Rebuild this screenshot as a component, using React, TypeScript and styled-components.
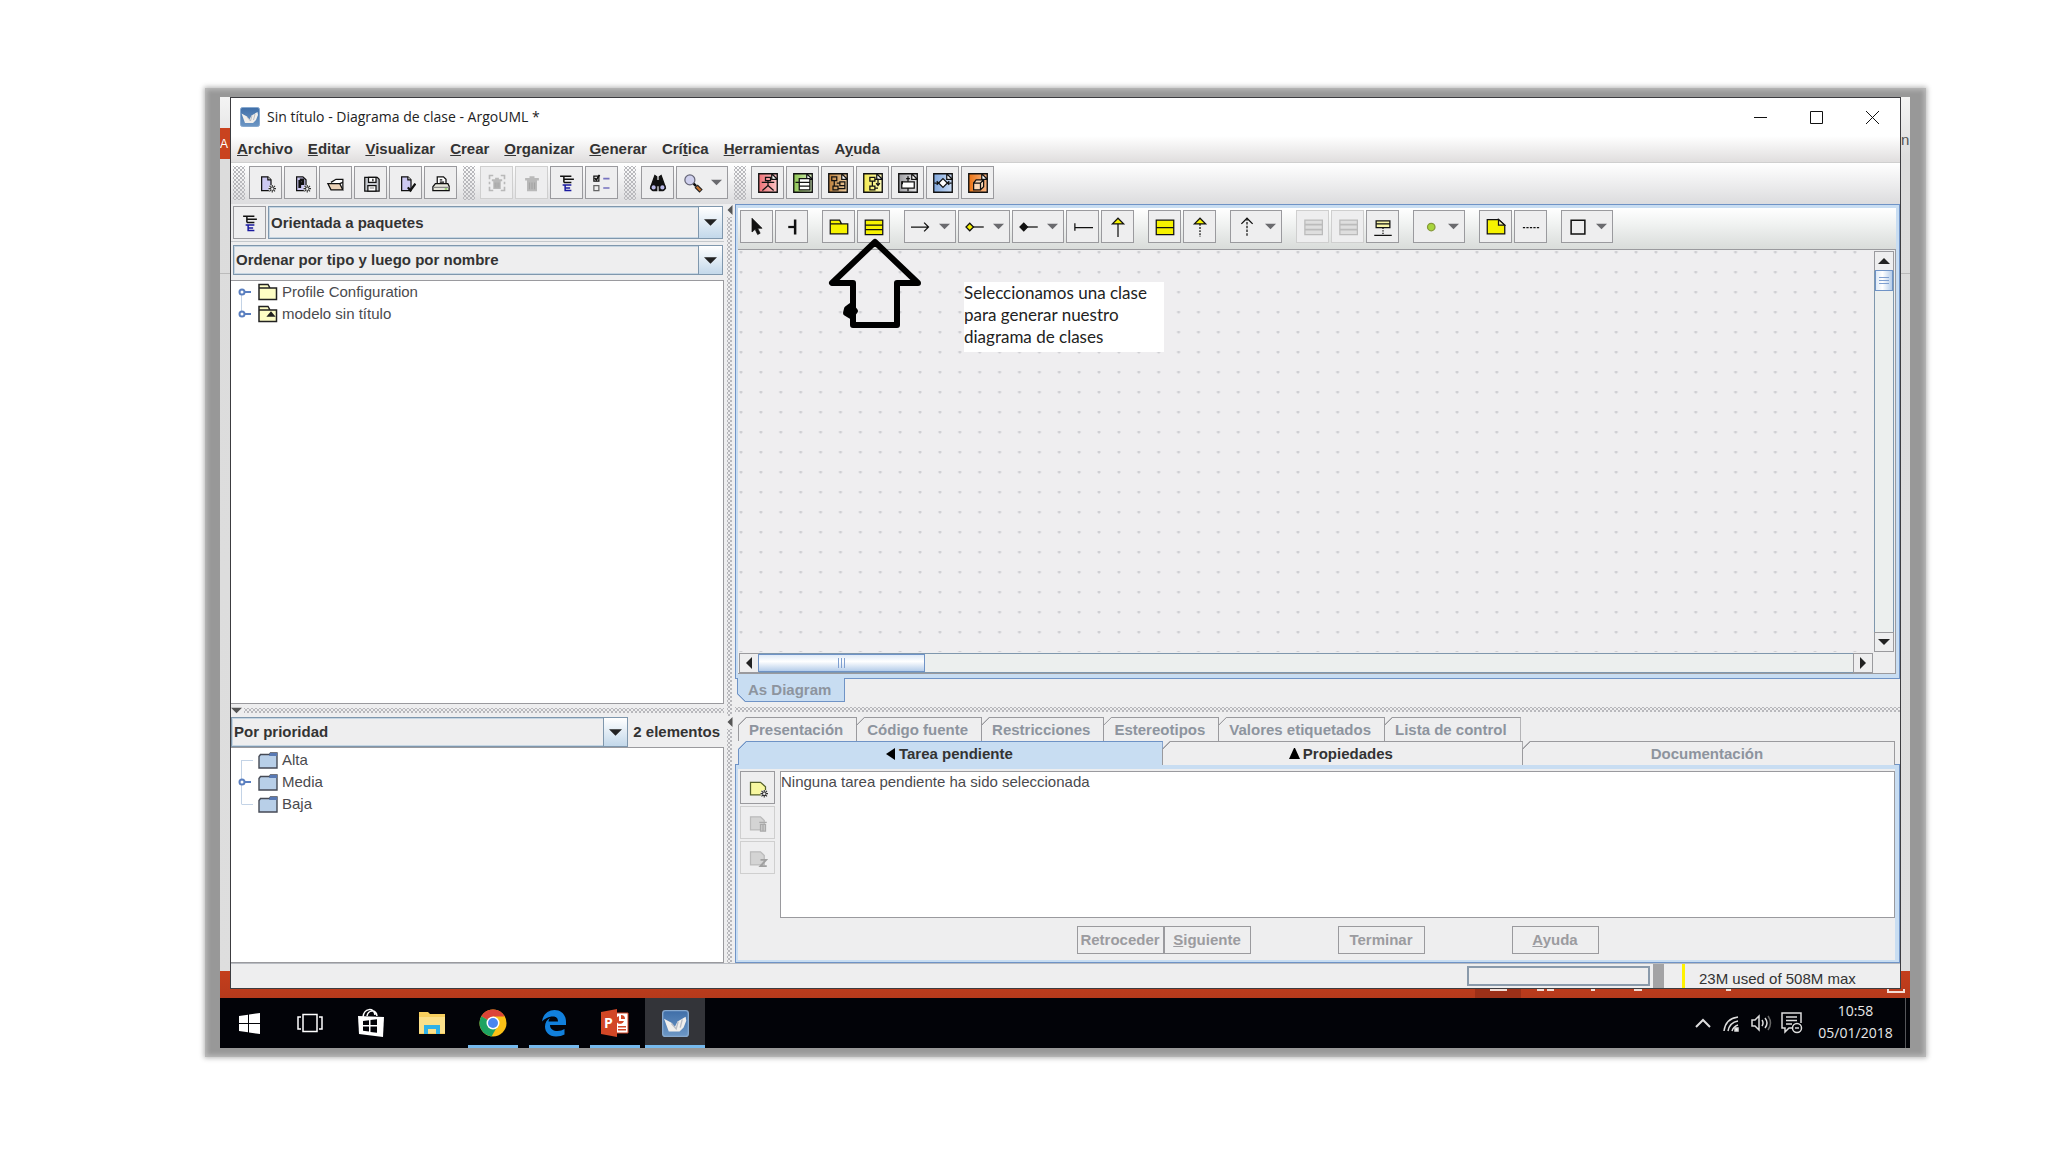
import React from "react";
import styled, { createGlobalStyle, css } from "styled-components";

const sans = `"Liberation Sans", Arial, sans-serif`;
const segoe = `"Open Sans", "Noto Sans", sans-serif`;
const line = "#9a9a9e";
const steel = "#7f97ad";
const blue = "#6f93c6";
const paleBlue = "#c8ddf2";
const face = "#eeeeef";

const bumps = css`
  background-image: radial-gradient(#b8b8bc 1px, transparent 1px),
    radial-gradient(#b8b8bc 1px, transparent 1px);
  background-size: 4px 4px;
  background-position: 0 0, 2px 2px;
`;

const GlobalStyle = createGlobalStyle`
  * { box-sizing: border-box; }
  body { margin: 0; background: #fff; }
  button, select, textarea { font: inherit; color: inherit; margin: 0; }
`;

/* ---------- page and desktop ---------- */
const Page = styled.div`
  min-height: 100vh;
  padding: 88px 122px 95px 205px;
  display: flex;
  font-family: ${sans};
  font-size: 15px;
  line-height: 18px;
  color: #333;
`;
const Frame = styled.div`
  flex: 1;
  min-width: 0;
  display: flex;
  flex-direction: column;
  padding: 9px 16px 9px 15px;
  background: #989898;
  box-shadow: 0 0 5px 1px #b4b4b4, inset 0 0 4px 2px #bcbcbc;
`;
const Desktop = styled.div`
  flex: 1;
  display: flex;
  position: relative;
  overflow: hidden;
  padding: 0 9px 9px 10px;
  background: linear-gradient(#c43e1c, #b53a1c) left bottom / 100% 27px no-repeat,
    linear-gradient(#c9431f, #c9431f) 0 31px / 10px 31px no-repeat,
    linear-gradient(#bbb, #bbb) 0 176px / 100% 1px no-repeat,
    linear-gradient(#f4f4f4, #dcdcdc 62px, #dedede);
`;
const Peek = styled.span<{ $side: "left" | "right"; $top: number; $color: string }>`
  position: absolute;
  top: ${(p) => p.$top}px;
  ${(p) => p.$side}: 0;
  width: 9px;
  font-size: ${(p) => (p.$side === "left" ? 12 : 15)}px;
  color: ${(p) => p.$color};
`;
const HiddenStatus = styled.svg`
  position: absolute;
  right: 0;
  bottom: 0;
`;
const Win = styled.section`
  flex: 1;
  min-width: 0;
  display: flex;
  flex-direction: column;
  position: relative;
  border: 1px solid #3c3c40;
  background: ${face};
`;

/* ---------- title and menus ---------- */
const TitleBar = styled.header`
  height: 38px;
  flex: none;
  display: flex;
  align-items: center;
  background: #fff;
  padding-left: 9px;
  font-family: ${segoe};
  color: #222;
`;
const Title = styled.h1`
  flex: 1;
  margin: 0 0 0 7px;
  font-size: 14px;
  font-weight: 400;
`;
const WinButton = styled.button`
  width: 56px;
  height: 38px;
  border: 0;
  padding: 0;
  background: none;
  display: grid;
  place-items: center;
`;
const MenuBar = styled.nav`
  height: 27px;
  flex: none;
  display: flex;
  align-items: center;
  gap: 15px;
  padding-left: 6px;
  border-bottom: 1px solid #cfcfcf;
  background: linear-gradient(#fff, #e0dede);
`;
const MenuItem = styled.button`
  border: 0;
  padding: 0;
  background: none;
  font-size: 15px;
  font-weight: 700;
`;

/* ---------- toolbars ---------- */
const ToolBar = styled.div`
  height: 41px;
  flex: none;
  display: flex;
  align-items: flex-start;
  padding: 3px 2px 0;
  background: linear-gradient(#fff, #dcdcde);
`;
const Grip = styled.span`
  width: 12px;
  height: 34px;
  margin: 0 5px 0 6px;
  ${bumps}
  &:first-child {
    margin: 0 4px 0 0;
  }
`;
const Group = styled.div`
  display: flex;
  gap: 2px;
  & + & {
    margin-left: 14px;
  }
`;
const Tool = styled.button<{ $drop?: boolean }>`
  width: ${(p) => (p.$drop ? 52 : 33)}px;
  height: 33px;
  flex: none;
  padding: 0;
  display: flex;
  align-items: center;
  justify-content: center;
  gap: 8px;
  border: 1px solid ${line};
  background: ${face};
  &:disabled {
    border-color: #cfcfcf;
  }
`;
const Main = styled.main`
  flex: 1;
  min-height: 0;
  display: flex;
`;

/* ---------- left column ---------- */
const Side = styled.aside`
  flex: 0 0 493px;
  display: flex;
  flex-direction: column;
`;
const Perspective = styled.div`
  display: flex;
  gap: 2px;
  padding: 2px 1px 2px 2px;
  border-bottom: 1px solid #c4c8cc;
`;
const Ordering = styled.div`
  display: flex;
  padding: 3px 1px 5px 2px;
`;
const ComboBox = styled.div<{ $h: number }>`
  position: relative;
  flex: 1;
  height: ${(p) => p.$h}px;
  border: 1px solid ${steel};
  box-shadow: inset 0 0 0 1px #c5d5e2;
  background: ${face};
`;
const ComboSelect = styled.select`
  appearance: none;
  width: 100%;
  height: 100%;
  border: 0;
  padding: 0 26px 0 2px;
  background: none;
  font-size: 15px;
  font-weight: 700;
`;
const ComboArrow = styled.span`
  position: absolute;
  inset: 0 0 0 auto;
  width: 24px;
  display: grid;
  place-items: center;
  border-left: 1px solid ${steel};
  background: linear-gradient(#fff, #c3d8ea);
  pointer-events: none;
`;
const Tree = styled.ul<{ $fill?: boolean }>`
  flex: 1;
  margin: 0;
  padding: ${(p) => (p.$fill ? 1 : 0)}px 0 0 7px;
  list-style: none;
  background: #fff;
  border: 1px solid ${line};
  border-left: 0;
`;
const Node = styled.li`
  height: 22px;
  display: flex;
  align-items: center;
  gap: 4px;
  color: #4a4a4e;
`;
const SideSplit = styled.div`
  height: 13px;
  flex: none;
  display: flex;
  align-items: center;
  gap: 2px;
`;
const Bumps = styled.span<{ $v?: boolean }>`
  ${(p) => (p.$v ? "flex: 1; width: 5px;" : "flex: 1; height: 5px;")}
  ${bumps}
`;
const TodoPane = styled.div`
  flex: 0 0 246px;
  display: flex;
  flex-direction: column;
`;
const TodoHead = styled.div`
  display: flex;
  align-items: center;
  gap: 5px;
  padding-right: 4px;
  font-weight: 700;
`;
const MainSplit = styled.div`
  flex: 0 0 11px;
  display: flex;
  flex-direction: column;
`;
const SplitPart = styled.div<{ $h?: number }>`
  flex: ${(p) => (p.$h ? `0 0 ${p.$h}px` : "1")};
  display: flex;
  flex-direction: column;
  align-items: center;
  gap: 2px;
  padding-top: 1px;
`;

/* ---------- diagram editor ---------- */
const Right = styled.div`
  flex: 1;
  min-width: 0;
  display: flex;
  flex-direction: column;
`;
const Editor = styled.div`
  flex: 1;
  display: flex;
  flex-direction: column;
  border: 1px solid ${blue};
  padding: 3px 3px 4px 2px;
  background: ${paleBlue};
`;
const EditorBody = styled.div`
  flex: 1;
  display: grid;
  grid-template-columns: 1fr 20px;
  grid-template-rows: 1fr 20px;
  gap: 1px;
  padding: 1px 1px 0;
  background: ${face};
  border: 1px solid ${line};
  border-left: 0;
`;
const DiagramBar = styled(ToolBar)`
  padding-top: 2px;
  background: linear-gradient(#fff, #f0f2f1 40%, #d9dcda);
`;
const Canvas = styled.div`
  position: relative;
  background-color: #efeef0;
  background-image: radial-gradient(circle at 2px 1px, #cfcfd3 1px, transparent 2px);
  background-size: 20px 20px;
  background-repeat: round repeat;
`;
const BigArrow = styled.svg`
  position: absolute;
  left: 86px;
  top: -16px;
`;
const Callout = styled.p`
  position: absolute;
  left: 225px;
  top: 31px;
  width: 200px;
  margin: 0;
  padding: 0 0 4px;
  background: #fff;
  color: #222;
  font-family: Lato, "Open Sans", sans-serif;
  font-size: 17px;
  line-height: 22px;
`;
const Track = styled.div<{ $v?: boolean }>`
  display: flex;
  flex-direction: ${(p) => (p.$v ? "column" : "row")};
  border: 1px solid ${steel};
  background: #ecefee;
`;
const Step = styled.button`
  width: 18px;
  height: 18px;
  flex: none;
  padding: 0;
  border: 0;
  outline: 1px solid ${line};
  background: ${face};
  display: grid;
  place-items: center;
`;
const Thumb = styled.div<{ $v?: boolean }>`
  ${(p) => (p.$v ? "height: 21px;" : "width: 167px;")}
  display: grid;
  place-items: center;
  border: 1px solid ${blue};
  background: linear-gradient(${(p) => (p.$v ? "90deg" : "180deg")}, #dfeaf7, #fff 40%, #b5cdea);
`;
const Gap = styled.span`
  flex: 1;
`;

/* ---------- tabs and details ---------- */
const Tab = styled.button<{ $on?: boolean; $grow?: number; $dim?: boolean }>`
  height: 24px;
  ${(p) => (p.$grow ? `flex: ${p.$grow} 1 0;` : "flex: none;")}
  padding: 0 13px 0 10px;
  margin-right: -1px;
  display: flex;
  align-items: center;
  justify-content: center;
  gap: 2px;
  border: 1px solid ${(p) => (p.$on ? blue : line)};
  border-bottom: 0;
  clip-path: polygon(8px 0, 100% 0, 100% 100%, 0 100%, 0 8px);
  background: linear-gradient(
      135deg,
      ${(p) => (p.$on ? blue : line)} 0 7px,
      ${(p) => (p.$on ? paleBlue : face)} 7px
    )
    border-box;
  color: ${(p) => (p.$dim ? "#8d949e" : "#333")};
  font-weight: 700;
  font-size: 15px;
  white-space: nowrap;
`;
const DiagramTab = styled(Tab)`
  position: relative;
  margin-top: -1px;
  border: 1px solid ${blue};
  border-top: 0;
  clip-path: polygon(0 0, 100% 0, 100% 100%, 8px 100%, 0 calc(100% - 8px));
  background: linear-gradient(45deg, ${blue} 0 7px, ${paleBlue} 7px) border-box;
`;
const DiagramTabs = styled.div`
  display: flex;
  padding-left: 2px;
`;
const RightSplit = styled.div`
  height: 15px;
  flex: none;
  display: flex;
  align-items: center;
`;
const TabRow = styled.div<{ $main?: boolean }>`
  display: flex;
  padding: 0 ${(p) => (p.$main ? 6 : 0)}px 0 3px;
  position: relative;
  margin-bottom: ${(p) => (p.$main ? -1 : 0)}px;
`;
const Panel = styled.div`
  border: 1px solid ${blue};
  box-shadow: inset -4px 4px 0 ${paleBlue}, inset 2px -2px 0 ${paleBlue};
  padding: 6px 4px 8px 4px;
  display: flex;
  gap: 5px;
`;
const PanelTools = styled.div`
  display: flex;
  flex-direction: column;
  gap: 2px;
`;
const PanelTool = styled(Tool)`
  width: 35px;
`;
const PanelMain = styled.div`
  flex: 1;
  display: flex;
  flex-direction: column;
  gap: 8px;
`;
const Message = styled.textarea`
  display: block;
  width: 100%;
  height: 147px;
  resize: none;
  outline: 0;
  border: 1px solid ${line};
  padding: 1px 0 0;
  background: #fff;
  color: #4a4a4e;
`;
const Wizard = styled.div`
  display: flex;
  justify-content: center;
  gap: 87px;
`;
const Pair = styled.div`
  display: flex;
`;
const WizardButton = styled.button`
  width: 87px;
  height: 28px;
  padding: 0;
  border: 1px solid ${line};
  background: ${face};
  color: #9b9b9f;
  font-size: 15px;
  font-weight: 700;
`;

/* ---------- status bar ---------- */
const Status = styled.footer`
  height: 25px;
  flex: none;
  display: flex;
  align-items: center;
  justify-content: flex-end;
  border-top: 1px solid #b9bcc2;
`;
const Progress = styled.div`
  width: 183px;
  height: 20px;
  border: 2px solid #8a9aab;
`;
const Block = styled.span`
  width: 11px;
  height: 24px;
  margin: 0 18px 0 3px;
  background: #a3a3a5;
`;
const Memory = styled.span`
  height: 24px;
  width: 218px;
  padding: 6px 0 0 14px;
  border-left: 3px solid #fff200;
  white-space: nowrap;
`;

/* ---------- taskbar ---------- */
const TaskBar = styled.div`
  height: 50px;
  flex: none;
  display: flex;
  background: #020308;
  color: #fff;
`;
const Task = styled.button<{ $running?: boolean; $active?: boolean }>`
  width: ${(p) => (p.$active ? 60 : 61)}px;
  padding: 0;
  border: 0;
  display: grid;
  place-items: center;
  background: ${(p) => (p.$active ? "#333439" : "none")};
  ${(p) =>
    (p.$running || p.$active) &&
    `background-image: linear-gradient(#76b9ed, #76b9ed);
     background-repeat: no-repeat;
     background-position: center bottom;
     background-size: ${p.$active ? "100%" : "50px"} 3px;`}
  &:first-child {
    width: 59px;
  }
`;
const Tray = styled.div`
  flex: 1;
  display: flex;
  align-items: center;
  justify-content: flex-end;
  gap: 8px;
  padding-right: 4px;
`;
const Clock = styled.time`
  width: 96px;
  height: 50px;
  margin-left: -1px;
  padding: 2px 4px 0 0;
  border-right: 1px solid #55565a;
  text-align: center;
  font-family: ${segoe};
  font-size: 14px;
  line-height: 22px;
  color: #e8e8e8;
`;
const ClockLine = styled.span`
  display: block;
`;

/* ---------- icons ---------- */
const Svg = ({ size = 20, children }: { size?: number; children: React.ReactNode }) => (
  <svg width={size} height={size} viewBox="0 0 16 16" fill="none" stroke="#111" aria-hidden="true">
    {children}
  </svg>
);
type Dir = "up" | "down" | "left" | "right";
const shapes: Record<Dir, string> = {
  down: "M0 3h12l-6 6z",
  up: "M0 9h12l-6-6z",
  left: "M9 0v12l-6-6z",
  right: "M3 0v12l6-6z",
};
const Tri = ({ dir = "down", size = 10, color = "#222" }: { dir?: Dir; size?: number; color?: string }) => (
  <svg width={size} height={size} viewBox="0 0 12 12" aria-hidden="true">
    <path d={shapes[dir]} fill={color} />
  </svg>
);
const TabMark = ({ d }: { d: string }) => (
  <svg width="12" height="14" viewBox="0 0 12 14" aria-hidden="true">
    <path d={d} fill="#000" />
  </svg>
);
const Star = ({ x = 13, y = 12.5 }: { x?: number; y?: number }) => (
  <g>
    <path
      d={`M${x - 3} ${y}h6M${x} ${y - 3}v6M${x - 2.2} ${y - 2.2}l4.400 4.400M${x + 2.2} ${y - 2.2}l-4.400 4.400`}
      stroke="#333"
      strokeWidth=".9"
    />
    <circle cx={x} cy={y} r="1" fill="#eee" stroke="none" />
  </g>
);
const Sheet = () => <path d="M4.500 3h5l2.500 2.500V14h-7.500z" fill="#cdc9f2" />;
const icNew = <Svg><Sheet /><path d="M9.500 3v2.500H12" fill="#fff" /><circle cx="13" cy="12.500" r="3" fill="#eee" stroke="none" /><Star /></Svg>;
const icNewP = <Svg><Sheet /><path d="M7 5.500v6.500M7 5.500h2.500v3H7" strokeWidth="2.200" /><circle cx="13" cy="12.500" r="3" fill="#eee" stroke="none" /><Star /></Svg>;
const icOpen = <Svg><path d="M4 7.500l4-2.500h5.500v8" fill="#fff" /><path d="M1.500 8.500h9.500l2.500 5H4z" fill="#ecd3b8" /><path d="M11 8.500l2.500-1" /></Svg>;
const icSave = <Svg><path d="M3 3.500h10l1.500 1.500v9.500H3z" fill="#c5c8ce" /><path d="M6 3.500h6v4H6z" fill="#fff" /><path d="M9.500 4.500v2" /><path d="M5.500 10h6.500v4.500H5.500z" fill="#fff" /><path d="M7 12h3.500" stroke="#999" /></Svg>;
const icExport = <Svg><Sheet /><path d="M9.500 3v2.500H12" fill="#fff" /><path d="M9.500 11.500l2 2.500L15.500 8.500" strokeWidth="1.800" /></Svg>;
const icPrint = <Svg><path d="M5 8.500V3h5l2 2v3.500" fill="#fff" /><path d="M7 5.500h2M7 7.200h3.500" /><path d="M3.500 8.500h10l1 2v3.500h-13v-3z" fill="#e8e8dc" /><path d="M2 11.500h12.500" stroke="#888" /><path d="M11 12.800h2" stroke="#7c4" /></Svg>;
const Can = () => <g stroke="none" fill="#b9b9b9"><path d="M2.500 4h11v2h-11zM6 2.500h4V4H6zM4 6h8v8.500H4z" /><path d="M6 7.500v5.500M8 7.500v5.500M10 7.500v5.500" stroke="#a4a4a4" /></g>;
const icRemove = <Svg><path d="M2 5V2h3M11 2h3v3M14 11v3h-3M5 14H2v-3M2 7v2M14 7v2" stroke="#b9b9b9" strokeWidth="1.300" /><g transform="translate(2 2) scale(.75)"><Can /></g></Svg>;
const icTrash = <Svg><Can /></Svg>;
const icTree = <Svg><path d="M2.500 2.500h9M5.500 2.500v5M5.500 5h8M5.500 7.500h6" strokeWidth="1.200" /><path d="M4.500 9.500h7M6.500 9.500v4.500h5M6.500 12h4" stroke="#1a1aa0" strokeWidth="1.200" /></Svg>;
const icCheck = <Svg><path d="M1.500 2.500h4v4h-4z" fill="#fff" /><path d="M2 4l1.500 1.500L6 1.500" strokeWidth="1.400" /><path d="M1.500 10h4v4h-4z" fill="#eee" stroke="#666" /><path d="M9 4.500h5M9 12h5" stroke="#7672c0" strokeWidth="1.300" /></Svg>;
const icFind = <Svg><path d="M5.500 2L3 9l-1 3 2 2h3V3zM10.500 2L13 9l1 3-2 2H9V3z" fill="#111" /><path d="M7 6h2v4H7z" fill="#111" /><circle cx="4.500" cy="11.500" r="2.200" fill="#b9b8e8" /><circle cx="11.500" cy="11.500" r="2.200" fill="#b9b8e8" /></Svg>;
const icZoom = <Svg><circle cx="5.500" cy="5.500" r="4" fill="#cfd0ee" stroke="#667" /><path d="M8.500 8.500l2 2" strokeWidth="2" /><path d="M10.500 10.500l4 4" stroke="#222" strokeWidth="3.600" /><path d="M11 11l3 3" stroke="#c9732c" strokeWidth="1.800" /></Svg>;
const Doc = ({ id, c, light, children }: { id: string; c: string; light: string; children: React.ReactNode }) => (
  <Svg>
    <defs>
      <linearGradient id={id}>
        <stop offset="0" stopColor={c} />
        <stop offset="1" stopColor={light} />
      </linearGradient>
    </defs>
    <path d="M.6.6h14.800v14.800H.6z" fill={`url(#${id})`} strokeWidth="1.100" />
    <path d="M11 .6V5h4.400z" fill="#fff" />
    {children}
  </Svg>
);
const diagramIcons: [string, React.ReactNode][] = [
  ["Diagrama de casos de uso", <Doc id="uc" c="#ef7076" light="#fbc4c4"><path d="M6 3.500h4v2.500H6zM3 7.500h10M8 6v4M8 10l-4.500 4M8 10l4.500 4" /></Doc>],
  ["Diagrama de clases", <Doc id="cl" c="#8fc653" light="#d8f0bd"><path d="M5 4.500h8.500v9H5z" fill="#fff" /><path d="M5 7.500h8.500M5 10.500h8.500M2 7.500h3" /></Doc>],
  ["Diagrama de secuencia", <Doc id="sq" c="#bd7f3b" light="#edcda0"><path d="M3 3h4v3H3zM9.500 7h4v3h-4zM4 10.500h4v3H4zM5 6v4.500M7 8h2.500M8 12.500h5.500V10" /></Doc>],
  ["Diagrama de estados", <Doc id="st" c="#f3e94f" light="#fdfab8"><path d="M5.500 3.500h4v3h-4zM5.500 10.500h4v3h-4zM9.500 5H12v4M10.500 8l1.500 2 1.500-2M7.500 6.500v4M9.500 12H12" /></Doc>],
  ["Diagrama de colaboración", <Doc id="co" c="#9c9ca0" light="#e6e6e8"><path d="M3 7h10v5H3z" fill="#fff" /><path d="M8 2.500V7M6.500 4.500h3M8 12v2.500M3.500 9v-2.500" /></Doc>],
  ["Diagrama de actividad", <Doc id="ac" c="#7fa6dc" light="#c9dcf5"><path d="M8 4.500L11.500 8 8 11.500 4.500 8z" fill="#fff" /><path d="M1 8h3.500M11.500 8H15M3 6.500L4.500 8 3 9.500M13 6.500L11.500 8 13 9.500" /></Doc>],
  ["Diagrama de despliegue", <Doc id="de" c="#ea7415" light="#f9b887"><path d="M4.500 8h5.500v5.500H4.500zM4.500 8l2-2.500h6V11l-2.500 2.500M10 8l2.500-2.500" fill="#fbd9b8" /></Doc>],
];
const y = "#f6f200";
const icPointer = <Svg><path d="M4 1v11l2.500-2.200L8.500 14l2-1-2-4h3.500z" fill="#111" strokeWidth=".6" /></Svg>;
const icBroom = <Svg><path d="M10.500 2v12" strokeWidth="2" /><path d="M5 8h5" strokeWidth="1.800" /></Svg>;
const icPackage = <Svg><path d="M1 5.500h14v8H1zM1 5.500V2.500h7.500l1.500 3" fill={y} /></Svg>;
const icClass = <Svg><path d="M1 2.500h14v11.500H1z" fill={y} /><path d="M1 6.500h14M1 10h14" /></Svg>;
const icAssoc = <Svg><path d="M0 8h14M10.500 4.500L14 8l-3.500 3.500" /></Svg>;
const icAggr = <Svg><path d="M6 8h9" /><path d="M.8 8l3-3 3 3-3 3z" fill={y} /></Svg>;
const icComp = <Svg><path d="M6 8h9" /><path d="M.8 8l3-3 3 3-3 3z" fill="#111" /></Svg>;
const icEnd = <Svg><path d="M1.500 5v6M1.500 8.500H16" /></Svg>;
const icGen = <Svg><path d="M8 5.500V16" /><path d="M3.500 5.500L8 1l4.500 4.500z" fill={y} /></Svg>;
const icIface = <Svg><path d="M1 2.500h14v11.500H1z" fill={y} /><path d="M1 8.500h14" /></Svg>;
const icReal = <Svg><path d="M8 5.500V16" strokeDasharray="1.500 1" /><path d="M3.500 5.500L8 1l4.500 4.500z" fill={y} /></Svg>;
const icDep = <Svg><path d="M8 1v15" strokeDasharray="2 1" /><path d="M3.500 5.500L8 1l4.500 4.500" /></Svg>;
const icAttr = <Svg><path d="M1.500 2.500h14v11.500h-14z" fill="#dedede" stroke="#bbb" /><path d="M1.500 6h14M1.500 10h14" stroke="#bbb" strokeWidth="1.400" /></Svg>;
const icAssocClass = <Svg><path d="M2.500 3h11v5.500h-11z" fill="#f8f5a8" /><path d="M2.500 5.500h11" /><path d="M8 8.500v6" strokeDasharray="1 1" /><path d="M1 14.700h14" /></Svg>;
const icSignal = <Svg><circle cx="9" cy="8" r="3" fill="#a8d53c" stroke="#86983a" /></Svg>;
const icNote = <Svg><path d="M1 2h9l5 4.500V13.500H1z" fill={y} /><path d="M10 2v4.500h5z" fill="#f4f4b0" /></Svg>;
const icLink = <Svg><path d="M1.500 8.500h13.500" strokeDasharray="1.800 1" /></Svg>;
const icRect = <Svg><path d="M2.500 2.500h11v11h-11z" strokeWidth="1.200" /></Svg>;

const AppLogo = ({ size }: { size: number }) => (
  <svg width={size} height={size} viewBox="0 0 20 20" aria-hidden="true">
    <defs>
      <linearGradient id="sea" x1="0" y1="0" x2="0" y2="1">
        <stop offset="0" stopColor="#3f6ea8" />
        <stop offset="1" stopColor="#6d97c5" />
      </linearGradient>
    </defs>
    <rect x=".5" y=".5" width="19" height="19" rx="2" fill="url(#sea)" stroke="#87a9cf" />
    <path d="M1.500 6.500l5.500 3 2.500 3 2-4L17.500 5l.5 3-2 5-3 3H5z" fill="#f1efec" />
    <path d="M7 10l3.500 4L12 8.500M15 7l-1.500 6" stroke="#b9bcc4" fill="none" />
  </svg>
);
const Handle = ({ up, low, open = true }: { up?: boolean; low?: boolean; open?: boolean }) => (
  <svg width="16" height="22" viewBox="0 0 16 22" fill="none" aria-hidden="true">
    {up && <path d="M3.500 0v11" stroke="#c3d3e6" />}
    {low && <path d="M3.500 11v11" stroke="#c3d3e6" />}
    {open ? (
      <>
        <circle cx="4" cy="11" r="2.500" fill="#fff" stroke="#5a7fc0" strokeWidth="2" />
        <path d="M7 11h6" stroke="#5a7fc0" strokeWidth="2" />
      </>
    ) : (
      <path d="M3.500 11.500H15" stroke="#c3d3e6" />
    )}
  </svg>
);
const YellowFolder = ({ model }: { model?: boolean }) => (
  <svg width="20" height="18" viewBox="0 0 20 18" stroke="#222" strokeWidth="1.500" aria-hidden="true">
    <path d="M1 5h17.500v11.500H1zM1 5V1.500h9L12 5" fill="#fdfdc4" />
    {model && <path d="M10 11l3-3.500 3 3.500z" fill="#222" />}
  </svg>
);
const BlueFolder = () => (
  <svg width="20" height="17" viewBox="0 0 20 17" aria-hidden="true">
    <path d="M1 4.500l1.500-2h9l1-1.500h6.500v15H1z" fill="#b8cfe8" stroke="#454a55" strokeWidth="1.400" />
    <path d="M12 1h7v3h-8z" fill="#5879b4" />
  </svg>
);

/* ---------- composed controls ---------- */
const Combo = ({ label, value, h }: { label: string; value: string; h: number }) => (
  <ComboBox $h={h}>
    <ComboSelect aria-label={label} defaultValue={value}>
      <option>{value}</option>
    </ComboSelect>
    <ComboArrow><Tri size={13} /></ComboArrow>
  </ComboBox>
);
type ToolDef = { label: string; icon: React.ReactNode; drop?: boolean; off?: boolean };
const Tools = ({ items }: { items: ToolDef[] }) => (
  <Group>
    {items.map((t) => (
      <Tool key={t.label} aria-label={t.label} $drop={t.drop} disabled={t.off}>
        {t.icon}
        {t.drop && <Tri size={11} color="#6a6a6e" />}
      </Tool>
    ))}
  </Group>
);

const menus: [string, string, string][] = [
  ["", "A", "rchivo"], ["", "E", "ditar"], ["", "V", "isualizar"], ["", "C", "rear"],
  ["", "O", "rganizar"], ["", "G", "enerar"], ["Crí", "t", "ica"], ["", "H", "erramientas"], ["A", "y", "uda"],
];
const fileTools: ToolDef[] = [
  { label: "Nuevo", icon: icNew }, { label: "Nuevo perfil", icon: icNewP }, { label: "Abrir", icon: icOpen },
  { label: "Guardar", icon: icSave }, { label: "Propiedades del proyecto", icon: icExport }, { label: "Imprimir", icon: icPrint },
];
const editTools: ToolDef[] = [
  { label: "Quitar del diagrama", icon: icRemove, off: true }, { label: "Borrar del modelo", icon: icTrash, off: true },
  { label: "Perspectivas", icon: icTree }, { label: "Configuración", icon: icCheck },
];
const viewTools: ToolDef[] = [{ label: "Buscar", icon: icFind }, { label: "Zoom", icon: icZoom, drop: true }];
const diagramTools: ToolDef[] = diagramIcons.map(([label, icon]) => ({ label, icon }));
const palette: ToolDef[][] = [
  [{ label: "Seleccionar", icon: icPointer }, { label: "Escoba", icon: icBroom }],
  [{ label: "Paquete", icon: icPackage }, { label: "Clase", icon: icClass }],
  [
    { label: "Asociación", icon: icAssoc, drop: true }, { label: "Agregación", icon: icAggr, drop: true },
    { label: "Composición", icon: icComp, drop: true }, { label: "Extremo de asociación", icon: icEnd },
    { label: "Generalización", icon: icGen },
  ],
  [{ label: "Interfaz", icon: icIface }, { label: "Realización", icon: icReal }],
  [{ label: "Dependencia", icon: icDep, drop: true }],
  [
    { label: "Atributo", icon: icAttr, off: true }, { label: "Operación", icon: icAttr, off: true },
    { label: "Clase asociación", icon: icAssocClass },
  ],
  [{ label: "Tipo de dato", icon: icSignal, drop: true }],
  [{ label: "Nota", icon: icNote }, { label: "Enlace de nota", icon: icLink }],
  [{ label: "Rectángulo", icon: icRect, drop: true }],
];
const backTabs = ["Presentación", "Código fuente", "Restricciones", "Estereotipos", "Valores etiquetados", "Lista de control"];

const taskIcons: React.ReactNode[] = [
  <svg width="21" height="21" viewBox="0 0 21 21" fill="#fff"><path d="M0 3l9-1.300V10H0zM10 1.500L21 0v10H10zM0 11h9v8.300L0 18zM10 11h11v10l-11-1.500z" /></svg>,
  <svg width="26" height="20" viewBox="0 0 26 20" fill="none" stroke="#fff" strokeWidth="1.500"><path d="M6 1.500h14v17H6zM4 4H1v12h3M22 4h3v12h-3" /></svg>,
  <svg width="28" height="30" viewBox="0 0 28 30"><path d="M6 9C7 0 17-1 18 7M10 8c1-6 9-7 10 0" fill="none" stroke="#fff" strokeWidth="1.500" /><path d="M1 8l26 1-1 20L2 26z" fill="#fff" /><path d="M6 13l6-.7V17H6zM13.500 12.100l6.500-.8V17h-6.500zM6 18.500h6v5l-6-.8zM13.500 18.500H20v6.300l-6.500-.9z" fill="#020308" /></svg>,
  <svg width="28" height="24" viewBox="0 0 28 24"><path d="M1 1h9l2 2h15v20H1z" fill="#f7cf5e" /><path d="M1 6h26v16H1z" fill="#fbe08a" /><path d="M6 23v-9h16v9h-4v-5h-8v5z" fill="#2fb1e8" /></svg>,
  <svg width="28" height="28" viewBox="0 0 28 28"><circle cx="14" cy="14" r="13.500" fill="#fbc116" /><path d="M14 14L2.300 7.200A13.500 13.500 0 0 1 25.700 7.500H14z" fill="#dc4437" /><path d="M14 14L2.300 7.200A13.500 13.500 0 0 0 12.500 27.400l5.500-9.500z" fill="#1da362" /><circle cx="14" cy="14" r="6.500" fill="#fff" /><circle cx="14" cy="14" r="5" fill="#4a86ee" /></svg>,
  <svg width="26" height="28" viewBox="0 0 26 28"><path d="M1 12.500C2 5 7.500 1 13.500 1 20.500 1 25 6 25 13v3H9c0 4 3.500 6 7.500 6 2.700 0 5-.8 7-2v5.500c-2.300 1.200-5 2-8.500 2C8 27.500 4 23 4 17.500c0-4 2-7 5-8.500-1 1.200-1.300 2.500-1.500 3.500H17c0-3-1.500-5-5-5C7.500 7.500 3.500 9.500 1 12.500z" fill="#1180dc" /></svg>,
  <svg width="29" height="28" viewBox="0 0 29 28"><path d="M15 4h13v20H15z" fill="#fff" stroke="#d24726" /><path d="M19 7a4 4 0 1 0 5 5h-5zM21 6v4h4a4 4 0 0 0-4-4zM18 17h8v1.500h-8zM18 20h8v1.500h-8z" fill="#d24726" /><path d="M1 3l16-3v28L1 25z" fill="#d24726" /><text x="4" y="19" fontSize="14" fontWeight="700" fontFamily="Open Sans" fill="#fff">P</text></svg>,
  <AppLogo size={27} />,
];
const taskNames = ["Inicio", "Vista de tareas", "Tienda", "Explorador", "Chrome", "Edge", "PowerPoint", "ArgoUML"];

export default function App() {
  return (
    <>
      <GlobalStyle />
      <Page>
        <Frame>
          <Desktop>
            <HiddenStatus width="440" height="9" viewBox="0 0 440 9" fill="none" stroke="#f3ddd5" strokeWidth="2" aria-hidden="true">
              <path d="M5 0h46v9H5z" fill="#9c3018" stroke="none" />
              <path d="M20 1h17M67 1h7M77 1h7M121 1h4M164 1h8M256 1h5M418 0v3h16V0" />
            </HiddenStatus>
            <Peek $side="left" $top={38} $color="#fff">A</Peek>
            <Peek $side="right" $top={34} $color="#555">n</Peek>
            <Win>
              <TitleBar>
                <AppLogo size={20} />
                <Title>Sin título - Diagrama de clase - ArgoUML *</Title>
                <WinButton aria-label="Minimizar"><svg width="13" height="13" stroke="#111"><path d="M0 6.500h13" /></svg></WinButton>
                <WinButton aria-label="Maximizar"><svg width="13" height="13" fill="none" stroke="#111"><path d="M.5.5h12v12H.5z" /></svg></WinButton>
                <WinButton aria-label="Cerrar"><svg width="13" height="13" stroke="#111"><path d="M0 0l13 13M13 0L0 13" /></svg></WinButton>
              </TitleBar>
              <MenuBar>
                {menus.map(([a, u, b]) => (
                  <MenuItem key={a + u + b}>{a}<u>{u}</u>{b}</MenuItem>
                ))}
              </MenuBar>
              <ToolBar>
                <Grip /><Tools items={fileTools} />
                <Grip /><Tools items={editTools} />
                <Grip /><Tools items={viewTools} />
                <Grip /><Tools items={diagramTools} />
              </ToolBar>
              <Main>
                <Side>
                  <Perspective>
                    <Tool aria-label="Configurar perspectivas">{icTree}</Tool>
                    <Combo label="Perspectiva" value="Orientada a paquetes" h={33} />
                  </Perspective>
                  <Ordering>
                    <Combo label="Orden" value="Ordenar por tipo y luego por nombre" h={30} />
                  </Ordering>
                  <Tree>
                    <Node><Handle low /><YellowFolder />Profile Configuration</Node>
                    <Node><Handle up /><YellowFolder model />modelo sin título</Node>
                  </Tree>
                  <SideSplit><Tri size={11} color="#555" /><Bumps /></SideSplit>
                  <TodoPane>
                    <TodoHead>
                      <Combo label="Agrupar tareas" value="Por prioridad" h={30} />
                      2 elementos
                    </TodoHead>
                    <Tree $fill>
                      <Node><Handle low open={false} /><BlueFolder />Alta</Node>
                      <Node><Handle up low /><BlueFolder />Media</Node>
                      <Node><Handle up open={false} /><BlueFolder />Baja</Node>
                    </Tree>
                  </TodoPane>
                </Side>
                <MainSplit>
                  <SplitPart><Tri dir="left" color="#555" /><Bumps $v /></SplitPart>
                  <SplitPart $h={247}><Tri dir="left" color="#555" /><Bumps $v /></SplitPart>
                </MainSplit>
                <Right>
                  <Editor>
                    <DiagramBar>
                      {palette.map((g) => <Tools key={g[0].label} items={g} />)}
                    </DiagramBar>
                    <EditorBody>
                      <Canvas>
                        <BigArrow width="100" height="96" viewBox="0 0 100 96" fill="none" stroke="#000" strokeWidth="6" strokeLinejoin="round">
                          <path d="M50 7L7 48h21v42h44V48h21z" />
                          <path d="M22 74l4-3 4 5-4 5-5-3z" fill="#000" />
                        </BigArrow>
                        <Callout>Seleccionamos una clase<br />para generar nuestro<br />diagrama de clases</Callout>
                      </Canvas>
                      <Track $v>
                        <Step aria-label="Subir"><Tri dir="up" size={12} /></Step>
                        <Thumb $v><svg width="10" height="8" stroke="#7f9fd0"><path d="M0 .5h10M0 3.500h10M0 6.500h10" /></svg></Thumb>
                        <Gap />
                        <Step aria-label="Bajar"><Tri size={12} /></Step>
                      </Track>
                      <Track>
                        <Step aria-label="Izquierda"><Tri dir="left" size={12} /></Step>
                        <Thumb><svg width="8" height="10" stroke="#7f9fd0"><path d="M.5 0v10M3.500 0v10M6.500 0v10" /></svg></Thumb>
                        <Gap />
                        <Step aria-label="Derecha"><Tri dir="right" size={12} /></Step>
                      </Track>
                    </EditorBody>
                  </Editor>
                  <DiagramTabs><DiagramTab $on $dim>As Diagram</DiagramTab></DiagramTabs>
                  <RightSplit><Bumps /></RightSplit>
                  <TabRow>
                    {backTabs.map((t) => <Tab key={t} $dim>{t}</Tab>)}
                  </TabRow>
                  <TabRow $main>
                    <Tab $on $grow={426}><TabMark d="M10 1v12L1 7z" />Tarea pendiente</Tab>
                    <Tab $grow={358}><TabMark d="M0 12h11L6 1H5z" />Propiedades</Tab>
                    <Tab $grow={371} $dim>Documentación</Tab>
                  </TabRow>
                  <Panel>
                    <PanelTools>
                      <PanelTool aria-label="Nueva tarea"><Svg><path d="M2 3.500h8l4 3.500v6.500H2z" fill="#f8f8a0" stroke="#55602a" /><circle cx="13" cy="12.500" r="3" fill="#eee" stroke="none" /><Star /></Svg></PanelTool>
                      <PanelTool aria-label="Resolver tarea" disabled><Svg><path d="M2 3h8l3 3v7.500H2z" fill="#d4d4d4" stroke="#bbb" /><path d="M9 7.500h6M10 9v5.500h4V9zM12 9v5" stroke="#aaa" fill="#ccc" /></Svg></PanelTool>
                      <PanelTool aria-label="Posponer crítica" disabled><Svg><path d="M2 3h8l3 3v7.500H2z" fill="#d4d4d4" stroke="#bbb" /><path d="M10 9.500h4.500L10 14.500h5" stroke="#a0a0a0" strokeWidth="1.500" /></Svg></PanelTool>
                    </PanelTools>
                    <PanelMain>
                      <Message readOnly aria-label="Tarea pendiente" defaultValue="Ninguna tarea pendiente ha sido seleccionada" />
                      <Wizard>
                        <Pair>
                          <WizardButton disabled>Retroceder</WizardButton>
                          <WizardButton disabled><u>S</u>iguiente</WizardButton>
                        </Pair>
                        <WizardButton disabled>Terminar</WizardButton>
                        <WizardButton disabled><u>A</u>yuda</WizardButton>
                      </Wizard>
                    </PanelMain>
                  </Panel>
                </Right>
              </Main>
              <Status>
                <Progress />
                <Block />
                <Memory>23M used of 508M max</Memory>
              </Status>
            </Win>
          </Desktop>
          <TaskBar>
            {taskIcons.map((icon, i) => (
              <Task key={taskNames[i]} aria-label={taskNames[i]} $running={i > 3} $active={i === 7}>{icon}</Task>
            ))}
            <Tray>
              <svg width="16" height="10" fill="none" stroke="#ddd" strokeWidth="2"><path d="M1 9l7-7 7 7" /></svg>
              <svg width="24" height="18" fill="none" stroke="#ddd" strokeWidth="1.500"><path d="M5 17C6 9 11 4 19 3M9 17c1-5 4-9 10-10M13 17c1-3 3-5 6-6" /><path d="M16 14h3v3h-3z" fill="#fff" /></svg>
              <svg width="22" height="18" fill="none" stroke="#ddd" strokeWidth="1.500"><path d="M1 6h3l4-4v14l-4-4H1zM11 6q2 3 0 6M14 4q4 5 0 10" /><path d="M17 2q5 7 0 14" stroke="#666" /></svg>
              <svg width="22" height="22" fill="none" stroke="#ddd" strokeWidth="1.500"><path d="M11 16H8l-4 4v-4H1V1h19v10M5 5h11M5 8.500h11M5 12h6" /><circle cx="16" cy="16" r="4.500" /><path d="M14 16h4" /></svg>
              <Clock>
                <ClockLine>10:58</ClockLine>
                <ClockLine>05/01/2018</ClockLine>
              </Clock>
            </Tray>
          </TaskBar>
        </Frame>
      </Page>
    </>
  );
}
